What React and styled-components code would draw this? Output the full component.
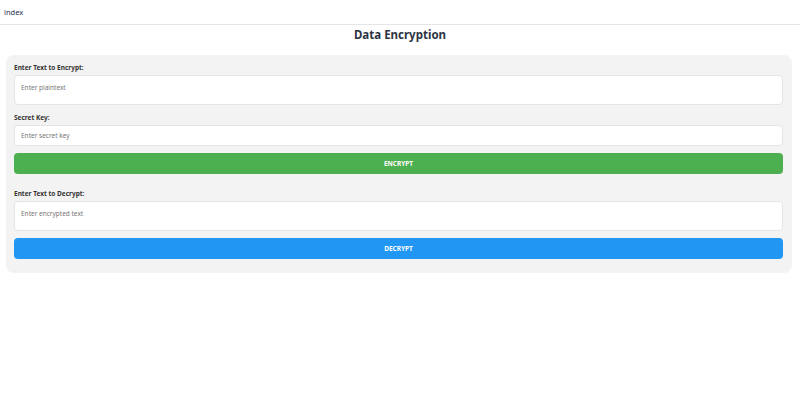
import React, { useState } from "react";
import styled, { createGlobalStyle } from "styled-components";

const GlobalStyle = createGlobalStyle`
  html, body {
    margin: 0;
    padding: 0;
    background: #ffffff;
    font-family: "Noto Sans", "Open Sans", sans-serif;
  }
`;

const Header = styled.header`
  height: 25px;
  box-sizing: border-box;
  border-bottom: 1px solid #e6e6e6;
  display: flex;
  align-items: center;
  padding: 0 4px;
  font-size: 7.5px;
  color: #1f2d4d;
`;

const Title = styled.h1`
  margin: 0 0 12px;
  height: 18px;
  display: flex;
  align-items: center;
  justify-content: center;
  font-size: 11.5px;
  font-weight: 700;
  color: #2c3443;
`;

const Panel = styled.div`
  margin: 0 8px 0 6px;
  padding: 8px 9px 14px 8px;
  background: #f3f3f3;
  border-radius: 8px;
  display: flex;
  flex-direction: column;
`;

const Field = styled.div`
  display: flex;
  flex-direction: column;
  margin-top: ${(p) => p.gap || 0}px;
`;

const Label = styled.label`
  font-size: 6.5px;
  font-weight: 700;
  line-height: 10px;
  color: #333;
  margin-bottom: 2px;
`;

const inputBase = `
  box-sizing: border-box;
  width: 100%;
  background: #fff;
  border: 1px solid #e4e4e4;
  border-radius: 4px;
  font-family: "Noto Sans", "Open Sans", sans-serif;
  font-size: 6.5px;
  color: #333;
  padding: 0 6px;
  outline: none;
  &::placeholder {
    color: #777;
  }
`;

const TextArea = styled.textarea`
  ${inputBase}
  height: 30px;
  padding-top: 7px;
  resize: none;
`;

const Input = styled.input`
  ${inputBase}
  height: 21px;
`;

const Button = styled.button`
  margin-top: 7px;
  height: 21px;
  border: none;
  border-radius: 4px;
  background: ${(p) => p.color};
  color: #fff;
  font-family: "Noto Sans", "Open Sans", sans-serif;
  font-size: 6.5px;
  font-weight: 700;
  text-transform: uppercase;
  cursor: pointer;
`;

export default function App() {
  const [plain, setPlain] = useState("");
  const [key, setKey] = useState("");
  const [cipher, setCipher] = useState("");

  return (
    <>
      <GlobalStyle />
      <Header>index</Header>
      <Title>Data Encryption</Title>
      <Panel>
        <Field>
          <Label>Enter Text to Encrypt:</Label>
          <TextArea
            placeholder="Enter plaintext"
            value={plain}
            onChange={(e) => setPlain(e.target.value)}
          />
        </Field>
        <Field gap={8}>
          <Label>Secret Key:</Label>
          <Input
            placeholder="Enter secret key"
            value={key}
            onChange={(e) => setKey(e.target.value)}
          />
        </Field>
        <Button color="#4caf50">Encrypt</Button>
        <Field gap={15}>
          <Label>Enter Text to Decrypt:</Label>
          <TextArea
            placeholder="Enter encrypted text"
            value={cipher}
            onChange={(e) => setCipher(e.target.value)}
          />
        </Field>
        <Button color="#2196f3">Decrypt</Button>
      </Panel>
    </>
  );
}
